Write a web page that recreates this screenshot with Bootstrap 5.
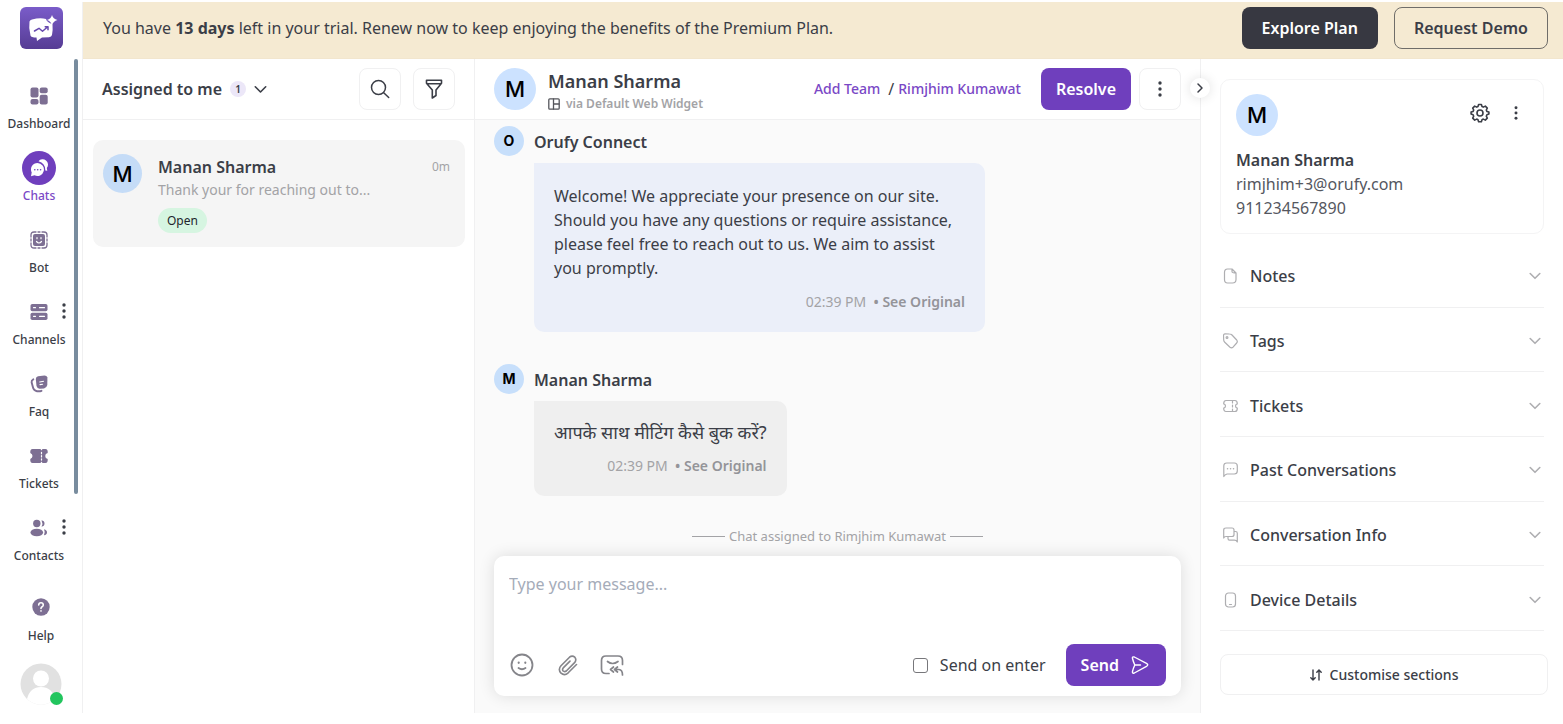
<!DOCTYPE html>
<html lang="en">
<head>
<meta charset="utf-8">
<meta name="viewport" content="width=device-width, initial-scale=1">
<title>Orufy Connect – Chats</title>
<link href="https://cdn.jsdelivr.net/npm/bootstrap@5.3.0/dist/css/bootstrap.min.css" rel="stylesheet">
<style>
:root{--ink:#3b3e47;--purple:#6f3fbd;--violet:#7a48c6;--mute:#a3a3a6;--line:#f0f0f1;--nav:#7d6f93}
body{font-family:"Noto Sans","Noto Sans Devanagari",sans-serif;font-size:16px;line-height:24px;color:var(--ink);background:#fff}
svg{display:block;flex:none;fill:none;stroke:currentColor;stroke-linecap:round;stroke-linejoin:round}
svg.solid{fill:currentColor;stroke:none}
a{text-decoration:none}
.semi{font-weight:600}
.mute{color:var(--mute)}
.tiny{font-size:12px;line-height:18px}
.shell{min-height:100vh;padding:2px 0 11px}

.side{width:83px;border-right:1px solid var(--line)}
.side .thumb{position:absolute;right:4px;top:57px;width:4px;height:435px;border-radius:2px;background:#788c9e}
.brand{margin:5px 0 30px}
.menu{width:78px}
.menu a,.helplink{color:var(--ink);font-size:12px;line-height:22px;font-weight:500;text-align:center}
.menu a{height:72px;display:block}
.glyph{width:34px;height:34px;border-radius:50%;color:var(--nav);display:flex;align-items:center;justify-content:center;margin:0 auto}
.menu a.active{color:var(--violet)}
.menu a.active .glyph{background:var(--purple);color:#fff}
.kebab{position:absolute;right:0;top:0;border:0;background:none;padding:8px 12px 8px 0;color:var(--ink)}
.helplink .glyph{height:36px}
.me{width:42px;height:42px}
.me .dot{position:absolute;right:-1px;bottom:0;width:13px;height:13px;border-radius:50%;background:#22c55e}

.banner{background:#f5ead2;height:57px;padding:0 15px 4px 20px;border-bottom:1px solid #f2e6ce}
.btn{font-size:16px;line-height:24px;border-radius:8px;height:42px;padding:0 19px;font-weight:600}
.btn-ink{background:#373841;color:#fff}
.btn-hollow{border:1px solid #6f6d69;color:var(--ink)}
.btn-purple{background:var(--purple);color:#fff;padding:0 14px}
.btn-ink:hover{background:#4a4b55;color:#fff}
.btn-purple:hover{background:#5f33a8;color:#fff}
.bar{height:61px;border-bottom:1px solid var(--line);padding:0 19px}
.tool{width:42px;padding:0;border:1px solid var(--line);background:#fff;color:var(--ink);display:flex;align-items:center;justify-content:center}
.plain{border:0;background:none;padding:0;color:inherit}

.inbox{width:392px;border-right:1px solid var(--line)}
.counter{width:16px;height:16px;border-radius:50%;background:#ece7f8;font-size:10px;line-height:16px;text-align:center}
.thread{margin:20px 9px 0 10px;padding:14px 15px 14px 10px;border-radius:10px;background:#f5f5f5}
.thread .title{line-height:26px}
.thread .snippet{font-size:14px;line-height:20px}
.ava{flex:none;width:42px;height:42px;border-radius:50%;background:#cce2ff;color:#000;font-family:Inter,sans-serif;font-size:22px;font-weight:500;display:flex;align-items:center;justify-content:center}
.ava-md{width:39px;height:39px;background:#c5dcf7}
.ava-sm{width:30px;height:30px;font-size:14px;font-weight:700;background:#c7dffb}
.state{background:#d6f5e1;border-radius:13px;font-size:12px;line-height:25px;padding:0 9px;color:#22252b}

.conv{background:#fafafa;border-right:1px solid var(--line);min-width:0}
.conv .bar{background:#fff}
.caller{font-size:18px;margin-bottom:2px}
.widget-mark{color:#55565c;margin-right:6px}
.link-p{color:var(--violet);font-size:14px;font-weight:500}
.feed{padding:6px 19px 0}
.sender{display:flex;gap:10px}
.who{line-height:32px;font-weight:600}
.bubble{margin:5px 0 32px 40px;border-radius:0 10px 10px 10px;background:#ebeff9;padding:21px 20px 18px;width:fit-content;max-width:451px}
.bubble p{margin:0 0 10px}
.bubble-in{background:#efefef;padding-top:19px}
.hindi{font-size:18px}
.meta{font-size:14px;color:var(--mute)}
.meta a{color:#949499;font-weight:600}
.event{font-size:13px;margin-bottom:8px}
.event:before,.event:after{content:"";width:33px;border-top:1px solid #a3a3a6}
.composer{border-radius:10px;background:#fff;margin:0 19px 17px;height:140px;padding:16px 15px 10px;box-shadow:0 0 16px rgba(0,0,0,.12)}
.composer textarea{border:0;resize:none;outline:0;padding:0;flex:1}
.composer textarea::placeholder{color:#a5acb9}
.composer .plain{color:#85858a;margin-right:19px}
.tick{width:15px;height:15px;border:1px solid #77777b;border-radius:3px;appearance:none;background:#fff}
.tick:checked{background:var(--purple)}

.info{width:362px;padding:20px 15px 18px 19px}
.fold{position:absolute;left:-11px;top:19px;width:20px;height:20px;border:0;border-radius:50%;background:#fff;padding:4px;box-shadow:0 0 12px rgba(0,0,0,.12);color:var(--ink)}
.person{border:1px solid #f4f4f5;border-radius:10px;margin-right:4px;padding:14px 15px 13px}
.person .detail{color:#55575f}
.person .tools{gap:24px;padding:9px 10px 0 0}
.sections{margin:9px 4px 23px 0}
.sections button{flex:1;border:0;border-bottom:1px solid #f0f0f1;background:none;padding:3px 3px 0;color:var(--ink);font-weight:500;text-align:left}
.sections svg{color:#aeaeb1}
.custom{font-size:14px;font-weight:500;height:41px;border:1px solid var(--line);color:var(--ink)}
</style>
</head>
<body>
<svg width="0" height="0" class="position-absolute" aria-hidden="true">
<symbol id="dots" viewBox="0 0 4 16"><g fill="currentColor" stroke="none"><circle cx="2" cy="2" r="1.700"/><circle cx="2" cy="8" r="1.700"/><circle cx="2" cy="14" r="1.700"/></g></symbol>
<symbol id="down" viewBox="0 0 12 8"><path d="M1.200 1.500 6 6.300l4.800-4.800"/></symbol>
</svg>
<div class="shell d-flex align-items-stretch">
<aside class="side flex-shrink-0 position-relative d-flex flex-column">
  <a href="#" class="brand align-self-center" aria-label="Orufy Connect">
    <svg class="solid" width="43" height="42" viewBox="0 0 43 42"><defs><linearGradient id="lg" x2="0" y2="1"><stop stop-color="#7a5cc9"/><stop offset="1" stop-color="#563c94"/></linearGradient></defs><rect width="43" height="42" rx="6" fill="url(#lg)"/><path fill="#fff" d="M12 12.500Q20 10.500 26 12 27 15.500 32.500 17 33 23 32 28 31.500 30 29 30.200L22 30.500 17 34 16.500 30.500Q11 30.500 10.500 28.500 8.500 21 9.500 14.500 10 13 12 12.500ZM32 8Q33 12 37.500 13 33 14 32 18.500 31 14 27 13 31 12 32 8Z"/><path d="m14.500 24 4.500-2.700 3.500 3 5-4.300m-2.300-.2h2.800v3" fill="none" stroke="#6749ae" stroke-width="1.500"/></svg>
  </a>
  <nav class="menu d-flex flex-column">
    <a href="#"><span class="glyph"><svg class="solid" width="18" height="18" viewBox="0 0 18 18"><rect x=".5" y=".5" width="8" height="10" rx="2"/><rect x="9.700" y=".5" width="8" height="5.800" rx="2"/><rect x=".5" y="12" width="8" height="5.500" rx="2"/><rect x="9.700" y="7.700" width="8" height="9.800" rx="2"/></svg></span>Dashboard</a>
    <a href="#" class="active"><span class="glyph"><svg class="solid" width="18" height="18" viewBox="0 0 18 18"><path d="M8.500 2.300A5.300 5.300 0 1 1 16.800 9l.5 2.800-2-.4Q15.500 4.500 8.500 2.300Z"/><path d="M7.500 4A6.500 6.500 0 1 1 4.500 16.300L1 17.300 1.700 13.500A6.500 6.500 0 0 1 7.500 4Z"/><g fill="#6f3fbd"><circle cx="4.800" cy="10.700" r=".8"/><circle cx="7.700" cy="10.700" r=".8"/><circle cx="10.600" cy="10.700" r=".8"/></g></svg></span>Chats</a>
    <a href="#"><span class="glyph"><svg width="18" height="18" viewBox="0 0 18 18"><rect x="3" y="3" width="12" height="12" rx="2" fill="currentColor" stroke="none"/><path d="M1 6V4q0-3 3-3h2M12 1h2q3 0 3 3v2M17 12v2q0 3-3 3h-2M6 17H4q-3 0-3-3v-2M1 8v2M17 8v2M8 1h2M8 17h2" stroke-width="1.300"/><path d="M7 6.500v1.200M11 6.500v1.200M6.500 10.500q2.500 3 5 0" stroke="#fff" stroke-width="1.200"/></svg></span>Bot</a>
    <div class="position-relative"><a href="#"><span class="glyph"><svg class="solid" width="18" height="18" viewBox="0 0 18 18"><rect x=".5" y="1" width="17" height="7.300" rx="1.800"/><rect x=".5" y="9.700" width="17" height="7.300" rx="1.800"/><path d="M3.500 4.700h2M9.500 4.700h5M3.500 13.300h2M9.500 13.300h5" stroke="#fff" stroke-width="1.200"/></svg></span>Channels</a><button class="kebab" aria-label="Channel options"><svg width="4" height="16"><use href="#dots"/></svg></button></div>
    <a href="#"><span class="glyph"><svg width="18" height="18" viewBox="0 0 18 18"><path fill="currentColor" stroke="none" d="m8 1.200 6.500-.8q2.300 0 2.900 2L17.300 10q-.6 3-3.300 3.400l-4.500.4q-2.200-.2-3-2.700L5.800 4Q5.800 1.600 8 1.200Z"/><path d="M3.300 4.300q-2 1-1.700 3l1.200 4.500q.8 3.900 4.200 4.400 3 .2 4.500-.4" stroke-width="1.900"/><path d="m9.700 7 3.800-.7M10 9.600l2.600-.4" stroke="#fff" stroke-width="1.100"/></svg></span>Faq</a>
    <a href="#"><span class="glyph"><svg class="solid" width="18" height="18" viewBox="0 0 18 18"><path d="M2.500 2h8l1 1.500 1-1.500h3Q18 2 17.700 6q-2.500.5-2.500 3t2.500 3q.3 4-2.200 4h-3l-1-1.500-1 1.500h-8Q0 16 .3 12q2.200-.8 2.200-3T.3 6Q0 2 2.500 2Z"/><path d="M11.500 5.300v1.500M11.500 8.500v1.500M11.500 11.800v1.300" stroke="#fff" stroke-width="1.200"/></svg></span>Tickets</a>
    <div class="position-relative"><a href="#"><span class="glyph"><svg class="solid" width="18" height="18" viewBox="0 0 18 18"><circle cx="6.800" cy="4.500" r="3.700"/><ellipse cx="6.800" cy="13.500" rx="6.300" ry="3.800"/><path d="M11.500 1.200q3 .6 3 3.300t-3 3.300q1.800-3.300 0-6.600ZM14 10.300q3 .8 3 3.200t-3 2.700q1.500-3 0-5.900Z"/></svg></span>Contacts</a><button class="kebab" aria-label="Contact options"><svg width="4" height="16"><use href="#dots"/></svg></button></div>
  </nav>
  <a href="#" class="helplink mt-auto mb-3"><span class="glyph"><svg width="18" height="18" viewBox="0 0 18 18"><circle cx="9" cy="9" r="8.700" fill="currentColor" stroke="none"/><path d="M6.700 7Q6.800 4.800 9 4.800T11.300 7Q11.200 8.300 9.800 9q-.8.500-.8 1.400M9 12.900v.2" stroke="#fff" stroke-width="1.600"/></svg></span>Help</a>
  <div class="me position-relative align-self-center mb-2"><svg class="solid" width="42" height="42" viewBox="0 0 42 42"><circle cx="21" cy="21" r="20.500" fill="#e1e1e1"/><circle cx="21" cy="15.500" r="8" fill="#fff"/><path d="M7 36Q10 24 21 24t14 12A20 20 0 0 1 7 36Z" fill="#fff"/></svg><span class="dot"></span></div>
  <span class="thumb"></span>
</aside>
<div class="flex-grow-1 d-flex flex-column">
  <header class="banner d-flex align-items-center">
    <div class="me-auto">You have <strong>13 days</strong> left in your trial. Renew now to keep enjoying the benefits of the Premium Plan.</div>
    <button class="btn btn-ink me-3">Explore Plan</button>
    <button class="btn btn-hollow">Request Demo</button>
  </header>
  <div class="flex-grow-1 d-flex">
    <section class="inbox flex-shrink-0">
      <div class="bar d-flex align-items-center">
        <button class="plain semi d-flex align-items-center me-auto">Assigned to me<span class="counter ms-2 me-1">1</span><svg class="ms-1" width="13" height="9" stroke-width="1.500"><use href="#down"/></svg></button>
        <button class="btn tool me-2" aria-label="Search"><svg width="20" height="20" viewBox="0 0 20 20" stroke-width="1.500"><circle cx="8.500" cy="8.500" r="7"/><path d="m13.700 13.700 5 4.800"/></svg></button>
        <button class="btn tool ms-1" aria-label="Filter"><svg width="18" height="20" viewBox="0 0 18 20" stroke-width="1.600"><path d="M1.500 1.300h15v3L11 11v5.500L7.300 19v-8L1.500 4.300ZM2 4.700h14"/></svg></button>
      </div>
      <article class="thread d-flex">
        <span class="ava ava-md">M</span>
        <div class="ms-3 flex-grow-1">
          <div class="title d-flex"><span class="semi me-auto">Manan Sharma</span><span class="tiny mute mt-1">0m</span></div>
          <div class="snippet mute">Thank your for reaching out to...</div>
          <div class="d-flex mt-2"><span class="state">Open</span></div>
        </div>
      </article>
    </section>
    <main class="conv flex-grow-1 d-flex flex-column">
      <div class="bar d-flex align-items-center">
        <span class="ava">M</span>
        <div class="mt-1 ms-2 me-auto ps-1"><div class="caller semi">Manan Sharma</div>
          <div class="tiny mute d-flex align-items-center"><svg class="widget-mark" width="12" height="12" viewBox="0 0 12 12" stroke-width="1.300"><rect x=".8" y=".8" width="10.400" height="10.400" rx="1"/><path d="M5.500 1v10M5.500 6H11"/></svg><span class="semi">via Default Web Widget</span></div></div>
        <a href="#" class="link-p">Add Team</a><span class="ms-2 me-1">/</span><a href="#" class="link-p me-3">Rimjhim Kumawat</a>
        <button class="btn btn-purple ms-1 me-2">Resolve</button>
        <button class="btn tool" aria-label="More"><svg width="4" height="16"><use href="#dots"/></svg></button>
      </div>
      <div class="feed flex-grow-1">
        <div class="sender"><span class="ava ava-sm">O</span><span class="who">Orufy Connect</span></div>
        <div class="bubble"><p>Welcome! We appreciate your presence on our site. Should you have any questions or require assistance, please feel free to reach out to us. We aim to assist you promptly.</p><div class="meta text-end">02:39 PM &nbsp;<a href="#">• See Original</a></div></div>
        <div class="sender"><span class="ava ava-sm">M</span><span class="who">Manan Sharma</span></div>
        <div class="bubble bubble-in mb-0"><p class="hindi" lang="hi">आपके साथ मीटिंग कैसे बुक करें?</p><div class="meta text-end">02:39 PM &nbsp;<a href="#">• See Original</a></div></div>
      </div>
      <div class="event mute d-flex align-items-center justify-content-center gap-1">Chat assigned to Rimjhim Kumawat</div>
      <form class="composer d-flex flex-column">
        <textarea aria-label="Message" placeholder="Type your message..."></textarea>
        <div class="d-flex align-items-center">
          <button type="button" class="plain" aria-label="Emoji"><svg width="26" height="24" viewBox="0 0 26 24" stroke-width="1.800"><circle cx="13" cy="12" r="10.500"/><path d="M9.700 9.700v.1M16.300 9.700v.1" stroke-width="2.200"/><path d="M9.500 15q3.500 2.500 7 0"/></svg></button>
          <button type="button" class="plain" aria-label="Attach file"><svg width="26" height="24" viewBox="0 0 26 24" stroke-width="1.600"><path d="m22.500 11.500-8.300 8.300q-3.600 3.300-7.200.4-3.300-3.800 0-7.400l8.500-8.600q2.700-2.200 5.300 0 2 2.600 0 5.200l-8.500 8.600q-1.700 1.200-3.200 0-1.100-1.600.1-3.100l6.800-6.800"/></svg></button>
          <button type="button" class="plain" aria-label="Canned replies"><svg width="26" height="24" viewBox="0 0 26 24" stroke-width="1.700"><path d="M10 20.500H7q-4.500 0-4.500-4.500V7.500Q2.500 3 7 3h12q4.500 0 4.500 4.500v4M8.500 8.500q5 4 10.500 0"/><path d="m14.500 14-3 2.500 3 2.500M18.500 14l-3 2.500 3 2.500M16 16.500h4q3.500.3 3.500 5.500"/></svg></button>
          <div class="ms-auto me-3 d-flex align-items-center"><input type="checkbox" class="tick m-0" id="enter"><label for="enter" class="ms-2 me-1 ps-1">Send on enter</label></div>
          <button type="submit" class="btn btn-purple d-flex align-items-center">Send<svg class="ms-2" width="24" height="20" viewBox="0 0 24 20" stroke-width="1.400"><path d="M5.500 3.500Q5 1.300 7.300 2L19.500 8.300q2.500 1.500 0 3L7.300 18q-2.300.8-1.800-1.500.7-3 2.300-6.500-1.600-3.500-2.300-6.500ZM8 10h5.500"/></svg></button>
        </div>
      </form>
    </main>
    <aside class="info flex-shrink-0 d-flex flex-column position-relative">
      <button class="fold" aria-label="Collapse panel"><svg width="12" height="12" viewBox="0 0 12 12" stroke-width="1.500"><path d="m4 2 4 4-4 4"/></svg></button>
      <div class="person">
        <div class="d-flex align-items-start"><span class="ava me-auto">M</span>
          <div class="tools d-flex align-items-center">
            <button class="plain" aria-label="Settings"><svg width="20" height="20" viewBox="0 0 20 20" stroke-width="1.600"><path d="M8.600 1.500h2.800l.6 2 1.300.6 2-1 2 2-1 1.900.6 1.400 2 .7v2l-2 .7-.6 1.400 1 1.900-2 2-2-1-1.300.6-.6 2H8.600l-.6-2-1.300-.6-2 1-2-2 1-1.900-.6-1.400-2-.7v-2l2-.7.6-1.400-1-1.900 2-2 2 1L8 3.500Z"/><circle cx="10" cy="10" r="3"/></svg></button>
            <button class="plain" aria-label="More"><svg width="4" height="14"><use href="#dots"/></svg></button>
          </div>
        </div>
        <div class="semi mt-2 pt-1">Manan Sharma</div>
        <div class="detail">rimjhim+3@orufy.com</div>
        <div class="detail">911234567890</div>
      </div>
      <div class="sections flex-grow-1 d-flex flex-column">
        <button class="d-flex align-items-center"><svg width="15" height="16" viewBox="0 0 15 16" stroke-width="1.200"><path d="M4.500 1H9l4 4v6.500q0 3.500-3.500 3.500h-5Q1.500 15 1.500 11.500v-7Q1.500 1 4.500 1ZM9 1v2.500Q9 5 13 5"/></svg><span class="ms-2 ps-1 me-auto">Notes</span><svg width="12" height="8" stroke-width="1.600"><use href="#down"/></svg></button>
        <button class="d-flex align-items-center"><svg width="15" height="16" viewBox="0 0 15 16" stroke-width="1.200"><path d="M2 .8 6.500 1Q8 1 9 2l4.700 5q1.200 1.500 0 3L10 14.200q-1.500 1.200-3 0L1.500 9Q.7 8 .7 6.700L.5 2.500Q.5 1 2 .8Z"/><circle cx="4" cy="4.500" r=".9"/></svg><span class="ms-2 ps-1 me-auto">Tags</span><svg width="12" height="8" stroke-width="1.600"><use href="#down"/></svg></button>
        <button class="d-flex align-items-center"><svg width="15" height="16" viewBox="0 0 15 16" stroke-width="1.200"><path d="M3 2.500h9q2.300 0 2.300 3.300-1.800.4-1.800 2.200t1.800 2.200q0 3.300-2.300 3.300H3q-2.300 0-2.300-3.300Q2.500 9.800 2.500 8T.7 5.800Q.7 2.500 3 2.500ZM9.500 3v2M9.500 7v2M9.500 11v2"/></svg><span class="ms-2 ps-1 me-auto">Tickets</span><svg width="12" height="8" stroke-width="1.600"><use href="#down"/></svg></button>
        <button class="d-flex align-items-center"><svg width="15" height="16" viewBox="0 0 15 16" stroke-width="1.200"><path d="M.8 14.500V4q0-3 3-3h7.500q3 0 3 3v5q0 3-3 3H4Q2 12.500.8 14.500Z"/><path d="M4.500 6.700h.1M7.500 6.700h.1M10.500 6.700h.1" stroke-width="1.500"/></svg><span class="ms-2 ps-1 me-auto">Past Conversations</span><svg width="12" height="8" stroke-width="1.600"><use href="#down"/></svg></button>
        <button class="d-flex align-items-center"><svg width="15" height="16" viewBox="0 0 15 16" stroke-width="1.200"><path d="M.7 11V3Q.7 1 3 1h6q2 0 2 2v4.500q0 2-2 2H3Q1.500 9.500.7 11ZM11 4.500h1.500q1.800 0 1.800 1.800V15q-1-1.800-3-1.800H6.500Q5 13.200 5 11.500v-2"/></svg><span class="ms-2 ps-1 me-auto">Conversation Info</span><svg width="12" height="8" stroke-width="1.600"><use href="#down"/></svg></button>
        <button class="d-flex align-items-center"><svg width="15" height="16" viewBox="0 0 15 16" stroke-width="1.200"><rect x="2.500" y="1" width="10" height="14" rx="3"/><path d="M6.500 12.500h2"/></svg><span class="ms-2 ps-1 me-auto">Device Details</span><svg width="12" height="8" stroke-width="1.600"><use href="#down"/></svg></button>
      </div>
      <button class="btn custom d-flex align-items-center justify-content-center gap-2"><svg width="12" height="12" viewBox="0 0 12 12" stroke-width="1.400"><path d="M3 1v10M.8 8.700 3 11l2.200-2.300M9 11V1M6.800 3.300 9 1l2.200 2.300"/></svg>Customise sections</button>
    </aside>
  </div>
</div>
</div>
<script src="https://cdn.jsdelivr.net/npm/bootstrap@5.3.0/dist/js/bootstrap.bundle.min.js"></script>
</body>
</html>
